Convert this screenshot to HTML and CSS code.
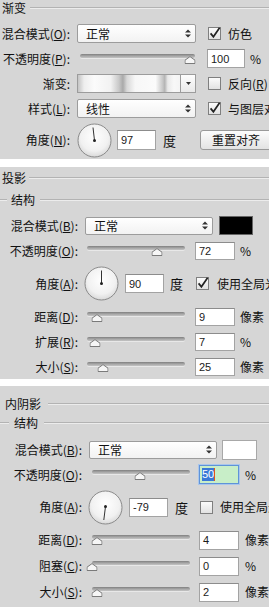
FILE: index.html
```html
<!DOCTYPE html>
<html lang="zh">
<head>
<meta charset="utf-8">
<title>图层样式</title>
<link rel="stylesheet" href="styles.css">
</head>
<body>

<section class="panel p1">
  <div class="hdr"><span class="ttl">渐变</span><span class="rule"></span></div>

  <div class="row first">
    <span class="lbl">混合模式(<u>O</u>):</span>
    <div class="select"><span class="sel-text">正常</span>
      <svg class="updown" width="6" height="9" viewBox="0 0 6 9"><path d="M0 3.6 L3 0.4 L6 3.6Z M0 5.4 L3 8.6 L6 5.4Z" fill="#333"/></svg>
    </div>
    <span class="check"><svg width="13" height="13" viewBox="0 0 13 13"><path d="M2.6 6.4 L5.4 9.8 L11.6 0.8" fill="none" stroke="#222" stroke-width="1.7"/></svg></span>
    <span class="ctext">仿色</span>
  </div>

  <div class="row">
    <span class="lbl">不透明度(<u>P</u>):</span>
    <div class="slider"><span class="groove"></span><svg class="thumb" style="left:96%" width="11" height="8" viewBox="0 0 11 8"><path d="M0.5 7.5 V4.2 L5.5 0.6 L10.5 4.2 V7.5 Z" fill="#f6f6f6" stroke="#7a7a7a"/></svg></div>
    <span class="num">100</span>
    <span class="unit">%</span>
  </div>

  <div class="row">
    <span class="lbl">渐变:</span>
    <div class="grad"><span class="grad-fill"></span><span class="grad-arrow"><svg width="5" height="3" viewBox="0 0 5 3"><path d="M0 0 H5 L2.5 3Z" fill="#333"/></svg></span></div>
    <span class="check off"></span>
    <span class="ctext">反向(<u>R</u>)</span>
  </div>

  <div class="row">
    <span class="lbl">样式(<u>L</u>):</span>
    <div class="select"><span class="sel-text">线性</span>
      <svg class="updown" width="6" height="9" viewBox="0 0 6 9"><path d="M0 3.6 L3 0.4 L6 3.6Z M0 5.4 L3 8.6 L6 5.4Z" fill="#333"/></svg>
    </div>
    <span class="check"><svg width="13" height="13" viewBox="0 0 13 13"><path d="M2.6 6.4 L5.4 9.8 L11.6 0.8" fill="none" stroke="#222" stroke-width="1.7"/></svg></span>
    <span class="ctext">与图层对齐</span>
  </div>

  <div class="row angle">
    <span class="lbl">角度(<u>N</u>):</span>
    <svg class="dial" width="35" height="35" viewBox="0 0 35 35">
      <defs><radialGradient id="dg1" cx="50%" cy="40%" r="60%"><stop offset="0" stop-color="#ffffff"/><stop offset="0.7" stop-color="#f1f1f1"/><stop offset="1" stop-color="#d9d9d9"/></radialGradient></defs>
      <circle cx="17.5" cy="17.5" r="16.5" fill="url(#dg1)" stroke="#8a8a8a"/>
      <line x1="17.5" y1="17.5" x2="16" y2="4.5" stroke="#333" stroke-width="1"/>
      <circle cx="17.5" cy="17.5" r="1.5" fill="#222"/>
    </svg>
    <span class="num anum">97</span>
    <span class="deg">度</span>
    <span class="btn">重置对齐</span>
  </div>
</section>

<section class="panel p2">
  <div class="hdr"><span class="ttl">投影</span><span class="rule"></span></div>
  <div class="sub"><span class="rule lrule"></span><span class="ttl">结构</span><span class="rule"></span></div>

  <div class="row first">
    <span class="lbl">混合模式(<u>B</u>):</span>
    <div class="select"><span class="sel-text">正常</span>
      <svg class="updown" width="6" height="9" viewBox="0 0 6 9"><path d="M0 3.6 L3 0.4 L6 3.6Z M0 5.4 L3 8.6 L6 5.4Z" fill="#333"/></svg>
    </div>
    <span class="swatch black"></span>
  </div>

  <div class="row">
    <span class="lbl">不透明度(<u>O</u>):</span>
    <div class="slider"><span class="groove"></span><svg class="thumb" style="left:71%" width="11" height="8" viewBox="0 0 11 8"><path d="M0.5 7.5 V4.2 L5.5 0.6 L10.5 4.2 V7.5 Z" fill="#f6f6f6" stroke="#7a7a7a"/></svg></div>
    <span class="num">72</span>
    <span class="unit">%</span>
  </div>

  <div class="row angle">
    <span class="lbl">角度(<u>A</u>):</span>
    <svg class="dial" width="35" height="35" viewBox="0 0 35 35">
      <defs><radialGradient id="dg2" cx="50%" cy="40%" r="60%"><stop offset="0" stop-color="#ffffff"/><stop offset="0.7" stop-color="#f1f1f1"/><stop offset="1" stop-color="#d9d9d9"/></radialGradient></defs>
      <circle cx="17.5" cy="17.5" r="16.5" fill="url(#dg2)" stroke="#8a8a8a"/>
      <line x1="17.5" y1="17.5" x2="17.5" y2="4.5" stroke="#333" stroke-width="1"/>
      <circle cx="17.5" cy="17.5" r="1.5" fill="#222"/>
    </svg>
    <span class="num anum">90</span>
    <span class="deg">度</span>
    <span class="check"><svg width="13" height="13" viewBox="0 0 13 13"><path d="M2.6 6.4 L5.4 9.8 L11.6 0.8" fill="none" stroke="#222" stroke-width="1.7"/></svg></span>
    <span class="ctext">使用全局光</span>
  </div>

  <div class="row">
    <span class="lbl">距离(<u>D</u>):</span>
    <div class="slider"><span class="groove"></span><svg class="thumb" style="left:10%" width="11" height="8" viewBox="0 0 11 8"><path d="M0.5 7.5 V4.2 L5.5 0.6 L10.5 4.2 V7.5 Z" fill="#f6f6f6" stroke="#7a7a7a"/></svg></div>
    <span class="num">9</span>
    <span class="unit">像素</span>
  </div>

  <div class="row">
    <span class="lbl">扩展(<u>R</u>):</span>
    <div class="slider"><span class="groove"></span><svg class="thumb" style="left:8%" width="11" height="8" viewBox="0 0 11 8"><path d="M0.5 7.5 V4.2 L5.5 0.6 L10.5 4.2 V7.5 Z" fill="#f6f6f6" stroke="#7a7a7a"/></svg></div>
    <span class="num">7</span>
    <span class="unit">%</span>
  </div>

  <div class="row">
    <span class="lbl">大小(<u>S</u>):</span>
    <div class="slider"><span class="groove"></span><svg class="thumb" style="left:16%" width="11" height="8" viewBox="0 0 11 8"><path d="M0.5 7.5 V4.2 L5.5 0.6 L10.5 4.2 V7.5 Z" fill="#f6f6f6" stroke="#7a7a7a"/></svg></div>
    <span class="num">25</span>
    <span class="unit">像素</span>
  </div>
</section>

<section class="panel p3">
  <div class="hdr"><span class="ttl">内阴影</span><span class="rule"></span></div>
  <div class="sub"><span class="rule lrule"></span><span class="ttl">结构</span><span class="rule"></span></div>

  <div class="row first">
    <span class="lbl">混合模式(<u>B</u>):</span>
    <div class="select"><span class="sel-text">正常</span>
      <svg class="updown" width="6" height="9" viewBox="0 0 6 9"><path d="M0 3.6 L3 0.4 L6 3.6Z M0 5.4 L3 8.6 L6 5.4Z" fill="#333"/></svg>
    </div>
    <span class="swatch white"></span>
  </div>

  <div class="row">
    <span class="lbl">不透明度(<u>O</u>):</span>
    <div class="slider"><span class="groove"></span><svg class="thumb" style="left:49%" width="11" height="8" viewBox="0 0 11 8"><path d="M0.5 7.5 V4.2 L5.5 0.6 L10.5 4.2 V7.5 Z" fill="#f6f6f6" stroke="#7a7a7a"/></svg></div>
    <span class="num focus"><span class="sel">50</span><span class="caret"></span></span>
    <span class="unit">%</span>
  </div>

  <div class="row angle">
    <span class="lbl">角度(<u>A</u>):</span>
    <svg class="dial" width="35" height="35" viewBox="0 0 35 35">
      <defs><radialGradient id="dg3" cx="50%" cy="40%" r="60%"><stop offset="0" stop-color="#ffffff"/><stop offset="0.7" stop-color="#f1f1f1"/><stop offset="1" stop-color="#d9d9d9"/></radialGradient></defs>
      <circle cx="17.5" cy="17.5" r="16.5" fill="url(#dg3)" stroke="#8a8a8a"/>
      <line x1="17.5" y1="16.5" x2="15.8" y2="30" stroke="#333" stroke-width="1"/>
      <circle cx="17.5" cy="16.5" r="1.5" fill="#222"/>
    </svg>
    <span class="num anum">-79</span>
    <span class="deg">度</span>
    <span class="check off"></span>
    <span class="ctext">使用全局光</span>
  </div>

  <div class="row tall">
    <span class="lbl">距离(<u>D</u>):</span>
    <div class="slider"><span class="groove"></span><svg class="thumb" style="left:5%" width="11" height="8" viewBox="0 0 11 8"><path d="M0.5 7.5 V4.2 L5.5 0.6 L10.5 4.2 V7.5 Z" fill="#f6f6f6" stroke="#7a7a7a"/></svg></div>
    <span class="num">4</span>
    <span class="unit">像素</span>
  </div>

  <div class="row tall">
    <span class="lbl">阻塞(<u>C</u>):</span>
    <div class="slider"><span class="groove"></span><svg class="thumb" style="left:0%" width="11" height="8" viewBox="0 0 11 8"><path d="M0.5 7.5 V4.2 L5.5 0.6 L10.5 4.2 V7.5 Z" fill="#f6f6f6" stroke="#7a7a7a"/></svg></div>
    <span class="num">0</span>
    <span class="unit">%</span>
  </div>

  <div class="row tall">
    <span class="lbl">大小(<u>S</u>):</span>
    <div class="slider"><span class="groove"></span><svg class="thumb" style="left:5%" width="11" height="8" viewBox="0 0 11 8"><path d="M0.5 7.5 V4.2 L5.5 0.6 L10.5 4.2 V7.5 Z" fill="#f6f6f6" stroke="#7a7a7a"/></svg></div>
    <span class="num">2</span>
    <span class="unit">像素</span>
  </div>
</section>

</body>
</html>
```

FILE: styles.css
```css
* { box-sizing: border-box; }

html, body {
  margin: 0;
  padding: 0;
  background: #ffffff;
}

body {
  width: 269px;
  overflow: hidden;
  font-family: "Noto Sans CJK SC", "Liberation Sans", sans-serif;
  font-size: 12px;
  color: #111;
}

u { text-decoration: underline; text-underline-offset: 1px; }

.panel {
  background: #d6d6d6;
  overflow: hidden;
  white-space: nowrap;
}

.p1 { height: 159px; --lw: 70px; }
.p2 { height: 212px; margin-top: 8px; --lw: 78px; }
.p3 { height: 221px; margin-top: 7px; --lw: 78px; --px: 4px; padding-top: 7px; }

/* section headers */
.hdr, .sub {
  display: flex;
  align-items: center;
}
.ttl { line-height: 1; flex: none; }
.rule {
  flex: 1;
  height: 2px;
  border-top: 1px solid #b3b3b3;
  border-bottom: 1px solid #ececec;
}
.lrule { flex: none; }

.p1 .hdr { height: 15px; }
.p1 .hdr .ttl { padding-left: 2px; }
.p1 .hdr .rule { margin-left: 4px; }

.p2 .hdr { height: 22px; }
.p2 .hdr .ttl { padding-left: 2px; }
.p2 .hdr .rule { margin-left: 3px; }
.p2 .sub { height: 21px; }
.p2 .sub .lrule { width: 7px; margin-right: 4px; }
.p2 .sub .ttl + .rule { margin-left: 5px; }

.p3 .hdr { height: 22px; }
.p3 .hdr .ttl { padding-left: 5px; }
.p3 .hdr .rule { margin-left: 7px; }
.p3 .sub { height: 16px; }
.p3 .sub .lrule { width: 9px; margin-right: 5px; }
.p3 .sub .ttl + .rule { margin-left: 6px; }

/* rows */
.row {
  display: flex;
  align-items: center;
  height: 25px;
  padding-left: var(--px, 0px);
}
.p1 .row.first { margin-top: 6px; }
.p2 .row.first { margin-top: 3px; }
.p3 .row.first { margin-top: 6px; }
.p1 .row.angle { height: 38px; }
.p2 .row.angle { height: 41px; }
.p3 .row.angle { height: 40px; }
.p3 .row.tall { height: 26px; }

.lbl {
  flex: none;
  width: var(--lw);
  text-align: right;
  line-height: 1;
}

/* dropdown */
.select {
  flex: none;
  display: flex;
  align-items: center;
  justify-content: space-between;
  padding: 0 4px 0 8px;
  border: 1px solid #9c9c9c;
  border-radius: 2px;
  background: linear-gradient(#ffffff, #f2f2f2);
  line-height: 1;
}
.p1 .select { margin-left: 7px; width: 119px; height: 19px; }
.p2 .select, .p3 .select { margin-left: 7px; width: 128px; height: 18px; }

/* gradient picker */
.grad {
  flex: none;
  display: flex;
  margin-left: 7px;
  width: 119px;
  height: 19px;
  border: 1px solid #9c9c9c;
}
.grad-fill {
  flex: 1;
  background: linear-gradient(to right,
    #c4c4c4 0%, #eeeeee 6%, #fbfbfb 16%, #f2f2f2 32%, #c9c9c9 40%,
    #a9a9a9 44%, #d8d8d8 48%, #f7f7f7 56%, #fbfbfb 76%, #c7c7c7 83%,
    #b4b4b4 85%, #e9e9e9 88%, #f8f8f8 94%, #f4f4f4 100%);
}
.grad-arrow {
  flex: none;
  width: 15px;
  border-left: 1px solid #9c9c9c;
  background: linear-gradient(#fdfdfd, #e9e9e9);
  display: flex;
  align-items: center;
  justify-content: center;
}

/* checkbox */
.check {
  flex: none;
  width: 13px;
  height: 13px;
  border: 1px solid #7f7f7f;
  background: linear-gradient(#fbfbfb, #e2e2e2);
  position: relative;
}
.check svg { position: absolute; left: -1px; top: -1px; overflow: visible; }
.p1 .check { margin-left: 12px; }
.p2 .check { margin-left: 13px; }
.p3 .check { margin-left: 12px; }
.ctext { margin-left: 7px; line-height: 1; }
.p2 .ctext { margin-left: 8px; }

/* color swatch */
.swatch { flex: none; }
.swatch.black { margin-left: 6px; width: 34px; height: 19px; background: #000; border: 1px solid #666; }
.swatch.white { margin-left: 5px; width: 35px; height: 20px; background: #fff; border: 1px solid #a8a8a8; }

/* slider */
.slider {
  flex: none;
  position: relative;
  height: 12px;
}
.groove {
  position: absolute;
  left: 0;
  right: 0;
  top: 1px;
  height: 4px;
  border-radius: 2px;
  background: linear-gradient(#7f7f7f, #a6a6a6 50%, #c4c4c4);
  box-shadow: 0 1px 0 #e8e8e8;
}
.thumb {
  position: absolute;
  top: 3px;
  transform: translateX(-50%);
}
.p1 .slider { margin-left: 10px; width: 115px; }
.p2 .slider { margin-left: 9px; width: 98px; }
.p3 .slider { margin-left: 10px; width: 98px; }

/* numeric input */
.num {
  flex: none;
  display: flex;
  align-items: center;
  padding-left: 3px;
  background: #ffffff;
  border: 1px solid #a3a3a3;
  border-top-color: #8c8c8c;
  font-family: "Liberation Sans", "DejaVu Sans", sans-serif;
  font-size: 11px;
  color: #1a1a1a;
}
.p1 .num { margin-left: 12px; width: 38px; height: 19px; }
.p2 .num { margin-left: 10px; width: 40px; height: 18px; }
.p3 .num { margin-left: 9px; width: 40px; height: 19px; }

.p1 .num.anum { margin-left: 5px; width: 39px; height: 20px; }
.p2 .num.anum, .p3 .num.anum { margin-left: 6px; width: 39px; height: 19px; }

.num.focus {
  background: #c8eec8;
  border: 1px solid #5f93d8;
  box-shadow: 0 0 0 1px #a9c6ec;
  padding-left: 2px;
}
.sel {
  background: #3a78d6;
  color: #ffffff;
  padding: 1px 0;
  line-height: 1;
}
.caret {
  width: 1px;
  height: 13px;
  background: #e0561b;
}

.unit { margin-left: 5px; line-height: 1; font-size: 12px; }
.p3 .unit { margin-left: 6px; }

/* angle dial */
.dial { flex: none; display: block; }
.p1 .dial { margin-left: 7px; }
.p2 .dial, .p3 .dial { margin-left: 6px; }

.deg { margin-left: 7px; line-height: 1; font-size: 13px; }
.p2 .deg { margin-left: 6px; }

/* button */
.btn {
  flex: none;
  margin-left: 24px;
  width: 72px;
  height: 20px;
  display: flex;
  align-items: center;
  justify-content: center;
  border: 1px solid #9a9a9a;
  border-radius: 3px;
  background: linear-gradient(#fcfcfc, #e3e3e3);
  line-height: 1;
}
```
